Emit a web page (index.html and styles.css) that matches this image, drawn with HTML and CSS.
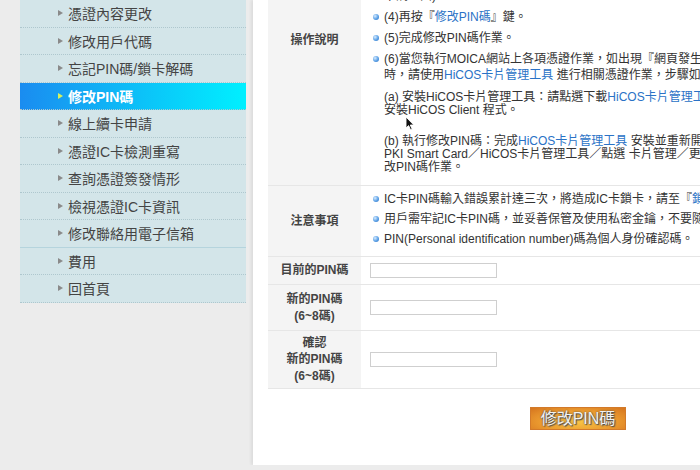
FILE: index.html
```html
<!DOCTYPE html>
<html lang="zh-Hant">
<head>
<meta charset="utf-8">
<title>修改PIN碼</title>
<link rel="stylesheet" href="styles.css">
</head>
<body>
<div class="page">
  <nav class="sidebar">
    <a class="nav-item">憑證內容更改</a>
    <a class="nav-item">修改用戶代碼</a>
    <a class="nav-item">忘記PIN碼/鎖卡解碼</a>
    <a class="nav-item active">修改PIN碼</a>
    <a class="nav-item">線上續卡申請</a>
    <a class="nav-item">憑證IC卡檢測重寫</a>
    <a class="nav-item">查詢憑證簽發情形</a>
    <a class="nav-item">檢視憑證IC卡資訊</a>
    <a class="nav-item section">修改聯絡用電子信箱</a>
    <a class="nav-item">費用</a>
    <a class="nav-item">回首頁</a>
  </nav>
  <main class="panel">
    <table class="form-table">
      <tr>
        <th>操作說明</th>
        <td class="desc">
          <ul class="bullets">
            <li>(1)請將憑證IC卡插入讀卡機。</li>
            <li>(2)輸入目前的PIN碼。</li>
            <li>(3)輸入新的PIN碼及確認新的PIN碼(PIN碼長度為6~8碼，<br>下調上面)</li>
            <li>(4)再按『<a class="link">修改PIN碼</a>』鍵。</li>
            <li>(5)完成修改PIN碼作業。</li>
            <li>(6)當您執行MOICA網站上各項憑證作業，如出現『網頁發生錯誤』訊息<br>時，請使用<a class="link">HiCOS卡片管理工具</a> 進行相關憑證作業，步驟如下：
              <p class="step">(a) 安裝HiCOS卡片管理工具：請點選下載<a class="link">HiCOS卡片管理工具</a> 並<br>安裝HiCOS Client 程式。</p>
              <p class="step step-b">(b) 執行修改PIN碼：完成<a class="link">HiCOS卡片管理工具</a> 安裝並重新開機後，請執行<br>PKI Smart Card／HiCOS卡片管理工具／點選 卡片管理／更改PIN碼，完成修<br>改PIN碼作業。</p>
            </li>
          </ul>
        </td>
      </tr>
      <tr>
        <th>注意事項</th>
        <td class="notes">
          <ul class="bullets">
            <li>IC卡PIN碼輸入錯誤累計達三次，將造成IC卡鎖卡，請至『<a class="link">鎖卡解碼</a>』辦理。</li>
            <li>用戶需牢記IC卡PIN碼，並妥善保管及使用私密金鑰，不要隨意交付他人。</li>
            <li>PIN(Personal identification number)碼為個人身份確認碼。</li>
          </ul>
        </td>
      </tr>
      <tr class="row-current">
        <th>目前的PIN碼</th>
        <td class="field"><input class="pin-input" type="password"></td>
      </tr>
      <tr class="row-new">
        <th>新的PIN碼<br>(6~8碼)</th>
        <td class="field"><input class="pin-input" type="password"></td>
      </tr>
      <tr class="row-confirm">
        <th>確認<br>新的PIN碼<br>(6~8碼)</th>
        <td class="field"><input class="pin-input" type="password"></td>
      </tr>
    </table>
    <div class="actions"><button class="btn" type="button">修改PIN碼</button></div>
  </main>
</div>
<svg class="cursor" width="10" height="15" viewBox="0 0 10 15"><path d="M1 1 L1 12 L3.6 9.6 L5.6 14 L7.2 13.3 L5.3 9 L8.8 9 Z" fill="#111" stroke="#fff" stroke-width="0.9"/></svg>
</body>
</html>
```
FILE: styles.css
```css
body {
  margin: 0;
  background: #ececec;
  font-family: "Liberation Sans", "Noto Sans CJK TC", sans-serif;
  overflow: hidden;
  position: relative;
}

.page {
  display: flex;
  align-items: flex-start;
  width: 1000px;
}

/* Sidebar */
.sidebar {
  margin-left: 20px;
  width: 226px;
  background: #d3e5e9;
  display: flex;
  flex-direction: column;
}

.nav-item {
  height: 26.5px;
  border-bottom: 1px dotted #aec7ce;
  display: flex;
  align-items: center;
  padding-left: 38px;
  font-size: 14px;
  color: #444;
  text-decoration: none;
  white-space: nowrap;
}

.nav-item::before {
  content: "";
  width: 0;
  height: 0;
  border-left: 5px solid #8a8a8a;
  border-top: 3px solid transparent;
  border-bottom: 3px solid transparent;
  margin-right: 5px;
}

.nav-item.active {
  background: linear-gradient(to right, #1a8cf0, #00f0ff);
  color: #fff;
  font-weight: bold;
}

.nav-item.active::before {
  border-left-color: #d6f25c;
}

.nav-item.section {
  border-bottom: 1px solid #b5d4dd;
}

/* Main panel */
.panel {
  margin-left: 7px;
  width: 650px;
  background: #fff;
  padding: 0 0 35px 15px;
  box-shadow: -2px 0 3px rgba(0, 0, 0, 0.07);
}

.form-table {
  width: 620px;
  margin-top: -105px;
  border-collapse: collapse;
  font-size: 12px;
  color: #333;
}

.form-table th {
  width: 93px;
  padding: 0;
  background: #f4f4f4;
  color: #444;
  font-weight: bold;
  text-align: center;
  vertical-align: middle;
  line-height: 16.5px;
  border-bottom: 1px solid #e6e6e6;
}

.form-table td {
  padding: 0 10px 0 12px;
  vertical-align: top;
  border-bottom: 1px solid #e6e6e6;
  white-space: nowrap;
}

.form-table td.desc {
  padding-top: 35px;
  padding-bottom: 11.5px;
}

.form-table td.notes {
  padding-top: 5px;
  padding-bottom: 9px;
}

.bullets {
  list-style: none;
  margin: 0;
  padding: 0;
}

.bullets li {
  padding-left: 11px;
  line-height: 16px;
  margin-bottom: 5px;
}

.notes .bullets li {
  margin-bottom: 4px;
}

.bullets li:last-child {
  margin-bottom: 0;
}

.bullets li::before {
  content: "";
  display: inline-block;
  width: 6px;
  height: 6px;
  border-radius: 50%;
  margin-left: -11px;
  margin-right: 5px;
  vertical-align: 1px;
  background: radial-gradient(circle at 35% 35%, #d8ecff 0%, #5aa0e6 55%, #2a6fc0 100%);
}

.step {
  margin: 7.5px 0 0;
  line-height: 13px;
}

.step-b {
  margin-top: 18px;
}

.link {
  color: #2a72c6;
  text-decoration: none;
}

.form-table td.field {
  vertical-align: middle;
  padding-left: 9px;
}

.row-current td, .row-current th { height: 27px; }
.row-new td, .row-new th { height: 45px; }
.row-confirm td, .row-confirm th { height: 57px; }

.pin-input {
  display: block;
  box-sizing: border-box;
  width: 127px;
  height: 15px;
  margin: 0;
  padding: 0;
  border: 1px solid #cfcfcf;
  background: #fff;
}

.actions {
  width: 620px;
  padding-top: 18px;
  text-align: center;
}

.btn {
  width: 96px;
  height: 23px;
  padding: 0;
  border: 1px solid #d27a2a;
  background: radial-gradient(ellipse at 50% 65%, #f8c544 0%, #ec9c30 55%, #d5741e 100%);
  color: #f2f2f2;
  font-family: "Liberation Sans", "Noto Sans CJK TC", sans-serif;
  font-size: 16px;
  line-height: 21px;
  text-shadow: 0 0 2px #3a3a3a, 1px 1px 1px #555;
}

.cursor {
  position: absolute;
  left: 405px;
  top: 116px;
}
```
